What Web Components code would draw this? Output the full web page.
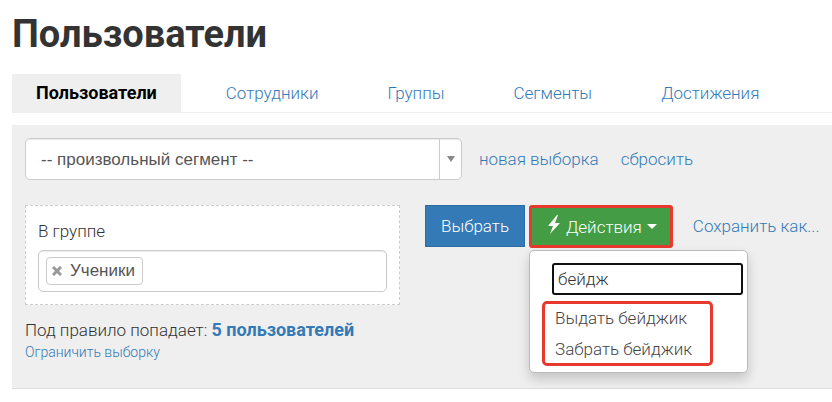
<!DOCTYPE html>
<html lang="ru">
<head>
<meta charset="utf-8">
<meta name="viewport" content="width=device-width, initial-scale=1">
<title>Пользователи</title>
<style>
  body {
    margin: 0;
    padding: 12px 0 12px 12px;
    background: #fff;
    color: #333;
    font: 300 17px/24px Roboto, "Liberation Sans", sans-serif;
    --link: #337ab7;
    --panel: #efefef;
    --border: #ccc;
    --mark: #e8392e;
  }
</style>
</head>
<body>
<users-page></users-page>

<script>
class PageTabs extends HTMLElement {
  connectedCallback() {
    this.attachShadow({ mode: 'open' });
    this.shadowRoot.innerHTML = `
      <style>
        :host {
          display: block;
          border-bottom: 1px solid #eee;
        }
        nav {
          display: flex;
          gap: 21px;
        }
        ::slotted(a) {
          padding: 7px 24px;
        }
        ::slotted(a[aria-current]) {
          background: var(--panel);
          font-weight: 700;
          font-size: 18px;
        }
      </style>
      <nav><slot></slot></nav>
    `;
  }
}

class SegmentSelect extends HTMLElement {
  connectedCallback() {
    this.attachShadow({ mode: 'open' });
    this.shadowRoot.innerHTML = `
      <style>
        :host {
          display: grid;
          box-sizing: border-box;
          grid-template-columns: 1fr 22px;
          height: 42px;
          border: 1px solid var(--border);
          border-radius: 5px;
          background: #fff;
          overflow: hidden;
          box-shadow: inset 0 1px 1px rgba(0, 0, 0, 0.08);
        }
        select {
          grid-area: 1 / 1 / 2 / 3;
          appearance: none;
          min-width: 0;
          padding: 0 32px 0 15px;
          border: 0;
          background: transparent;
          color: #555;
          font: 400 17px "Liberation Sans", sans-serif;
        }
        .arrow {
          grid-area: 1 / 2;
          display: flex;
          align-items: center;
          justify-content: center;
          border-left: 1px solid var(--border);
          pointer-events: none;
        }
      </style>
      <select aria-label="Сегмент">
        <option>${this.getAttribute('value')}</option>
      </select>
      <span class="arrow">
        <svg width="8" height="6" viewBox="0 0 8 6"><path d="M0 0h8L4 6z" fill="#888"/></svg>
      </span>
    `;
  }
}

class GroupFilter extends HTMLElement {
  connectedCallback() {
    this.attachShadow({ mode: 'open' });
    this.shadowRoot.innerHTML = `
      <style>
        :host {
          display: block;
          padding: 12px;
          border: 1px dashed var(--border);
          background: #fff;
        }
        label {
          display: block;
          margin-bottom: 6px;
          line-height: 26px;
        }
        .field {
          display: flex;
          align-items: center;
          gap: 4px;
          box-sizing: border-box;
          height: 42px;
          padding: 0 7px;
          border: 1px solid var(--border);
          border-radius: 5px;
          box-shadow: inset 0 1px 1px rgba(0, 0, 0, 0.08);
        }
        .tag {
          display: flex;
          align-items: center;
          gap: 8px;
          padding: 1px 7px 1px 5px;
          border: 1px solid var(--border);
          border-radius: 4px;
          color: #555;
          font: 400 17px/24px "Liberation Sans", sans-serif;
        }
        button {
          display: flex;
          padding: 0;
          border: 0;
          background: none;
        }
        input {
          flex: 1;
          min-width: 0;
          border: 0;
          outline: 0;
          background: none;
          font: inherit;
        }
      </style>
      <label for="group">В группе</label>
      <div class="field">
        <span class="tag">
          <button type="button" aria-label="Убрать">
            <svg width="10" height="10" viewBox="0 0 10 10"><path d="M1 1l8 8M9 1l-8 8" stroke="#999" stroke-width="3"/></svg>
          </button>
          <slot></slot>
        </span>
        <input id="group" type="text">
      </div>
    `;
  }
}

class ActionsMenu extends HTMLElement {
  connectedCallback() {
    this.attachShadow({ mode: 'open' });
    this.shadowRoot.innerHTML = `
      <style>
        :host {
          display: block;
          position: relative;
        }
        .toggle {
          display: flex;
          align-items: center;
          gap: 5px;
          box-sizing: border-box;
          height: 43px;
          padding: 0 13px 0 15px;
          border: 3px solid var(--mark);
          border-radius: 3px;
          background: #449d44;
          color: #fff;
          font: inherit;
        }
        .toggle svg:first-child {
          margin-bottom: 4px;
        }
        .menu {
          position: absolute;
          top: 45px;
          left: 0;
          box-sizing: border-box;
          width: 219px;
          padding: 12px 4px 6px 12px;
          border: 1px solid #bbb;
          border-radius: 5px;
          background: #fff;
          box-shadow: 0 6px 12px rgba(0, 0, 0, 0.18);
        }
        input {
          display: block;
          box-sizing: border-box;
          width: 191px;
          height: 32px;
          margin: 0 0 6px auto;
          padding: 0 4px;
          border: 2px solid #101010;
          border-radius: 3px;
          outline: 0;
          color: #333;
          font: inherit;
        }
        ul {
          box-sizing: border-box;
          width: 171px;
          margin: 0;
          padding: 0 10px;
          border: 3px solid var(--mark);
          border-radius: 5px;
          list-style: none;
        }
        li + li {
          margin-top: 3px;
        }
        a {
          display: block;
          padding: 2px 0;
          color: #444;
          line-height: 24px;
          text-decoration: none;
          white-space: nowrap;
        }
      </style>
      <button class="toggle" type="button" aria-expanded="true">
        <svg width="14" height="20" viewBox="0 0 14 20"><path d="M10 0L1 11h5L3 19 13 8H8L11 0z" fill="#fff"/></svg>
        <slot></slot>
        <svg width="10" height="5" viewBox="0 0 10 5"><path d="M0 0h10L5 5z" fill="#fff"/></svg>
      </button>
      <div class="menu">
        <input type="text" aria-label="Поиск действия" value="бейдж">
        <ul>
          <li><a href="#">Выдать бейджик</a></li>
          <li><a href="#">Забрать бейджик</a></li>
        </ul>
      </div>
    `;
  }
}

class UsersPage extends HTMLElement {
  connectedCallback() {
    this.attachShadow({ mode: 'open' });
    this.shadowRoot.innerHTML = `
      <style>
        :host {
          display: block;
        }
        h1 {
          margin: 0 0 18px;
          font-size: 38px;
          line-height: 44px;
          font-weight: 700;
        }
        a {
          color: var(--link);
          text-decoration: none;
        }
        a[aria-current] {
          color: #000;
        }
        .panel {
          margin-top: 12px;
          padding: 13px 0 26px 13px;
          border-bottom: 1px solid #ddd;
          background: var(--panel);
        }
        .segment {
          display: flex;
          align-items: center;
          margin-bottom: 25px;
        }
        segment-select {
          flex: 0 1 437px;
          margin-right: 17px;
        }
        .segment a + a {
          margin-left: 22px;
        }
        .rules {
          display: flex;
          align-items: flex-start;
          gap: 25px;
        }
        .filter {
          flex: 0 1 375px;
          min-width: 0;
        }
        .count {
          margin: 13px 0 0;
        }
        .count a {
          font-size: 18px;
          font-weight: 700;
        }
        .limit {
          display: block;
          font-size: 14px;
          line-height: 20px;
        }
        .buttons {
          display: flex;
          align-items: flex-start;
          gap: 4px;
          white-space: nowrap;
        }
        .choose {
          height: 42px;
          padding: 0 15px;
          border: 1px solid #2e6da4;
          background: #337ab7;
          color: #fff;
          font: inherit;
        }
        .save {
          margin-left: 16px;
          line-height: 42px;
        }
      </style>
      <h1>Пользователи</h1>
      <page-tabs>
        <a href="#" aria-current="page">Пользователи</a>
        <a href="#">Сотрудники</a>
        <a href="#">Группы</a>
        <a href="#">Сегменты</a>
        <a href="#">Достижения</a>
      </page-tabs>
      <div class="panel">
        <div class="segment">
          <segment-select value="-- произвольный сегмент --"></segment-select>
          <a href="#">новая выборка</a>
          <a href="#">сбросить</a>
        </div>
        <div class="rules">
          <div class="filter">
            <group-filter>Ученики</group-filter>
            <p class="count">Под правило попадает: <a href="#">5 пользователей</a></p>
            <a class="limit" href="#">Ограничить выборку</a>
          </div>
          <div class="buttons">
            <button class="choose" type="button">Выбрать</button>
            <actions-menu>Действия</actions-menu>
            <a class="save" href="#">Сохранить как...</a>
          </div>
        </div>
      </div>
    `;
  }
}

customElements.define('page-tabs', PageTabs);
customElements.define('segment-select', SegmentSelect);
customElements.define('group-filter', GroupFilter);
customElements.define('actions-menu', ActionsMenu);
customElements.define('users-page', UsersPage);
</script>
</body>
</html>
